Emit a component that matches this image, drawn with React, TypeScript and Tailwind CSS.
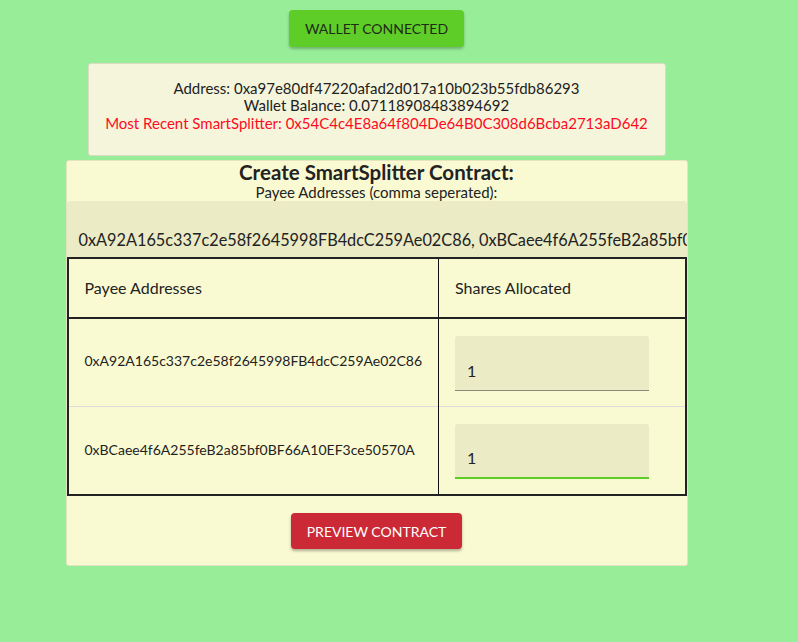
import React from 'react';

const payees = [
  { address: '0xA92A165c337c2e58f2645998FB4dcC259Ae02C86', shares: '1', focused: false },
  { address: '0xBCaee4f6A255feB2a85bf0BF66A10EF3ce50570A', shares: '1', focused: true },
];

export default function App() {
  return (
    <div className="min-h-[642px] w-full bg-[#98ee98] font-['Lato',sans-serif] text-[#222]">
      <div className="w-[753px] flex flex-col items-center pt-[10px]">
        <button className="h-[37px] px-[16px] rounded-[4px] bg-[#5fcd28] text-[14px] text-[#1e2a16] uppercase shadow-[0_2px_3px_rgba(0,0,0,0.25)]">
          Wallet Connected
        </button>

        <div className="mt-[16px] w-[578px] h-[93px] rounded-[3px] border border-[#dcdcc4] bg-[#f5f5dc] flex flex-col justify-center text-center text-[15px] leading-[17.5px] pb-[7px]">
          <div>Address: 0xa97e80df47220afad2d017a10b023b55fdb86293</div>
          <div>Wallet Balance: 0.07118908483894692</div>
          <div className="text-[#ff0a1e]">Most Recent SmartSplitter: 0x54C4c4E8a64f804De64B0C308d6Bcba2713aD642</div>
        </div>

        <div className="mt-[4px] w-[622px] rounded-[3px] border border-[#e4e4c0] bg-[#fafad2] overflow-hidden">
          <h2 className="text-center font-bold text-[20.5px] leading-[23px]">Create SmartSplitter Contract:</h2>
          <p className="text-center text-[15px] leading-[17px]">Payee Addresses (comma seperated):</p>

          <div className="h-[56px] bg-[#ebebc6] rounded-t-[3px] px-[12px] flex items-end pb-[8px] overflow-hidden">
            <span className="whitespace-nowrap text-[16.3px] leading-[18px]">
              0xA92A165c337c2e58f2645998FB4dcC259Ae02C86, 0xBCaee4f6A255feB2a85bf0BF66A10EF3ce50570A
            </span>
          </div>

          <table className="w-[620px] border-collapse border-2 border-[#222] table-fixed">
            <colgroup>
              <col className="w-[371px]" />
              <col />
            </colgroup>
            <thead>
              <tr className="h-[60px] border-b-2 border-[#222]">
                <th className="text-left font-normal text-[16px] pl-[16px] border-r border-[#111]">Payee Addresses</th>
                <th className="text-left font-normal text-[16px] pl-[16px]">Shares Allocated</th>
              </tr>
            </thead>
            <tbody>
              {payees.map((p, i) => (
                <tr key={p.address} className={i === 0 ? 'h-[88px] border-b border-[#dcdcdc]' : 'h-[89px]'}>
                  <td className={'pl-[16px] text-[14px] border-r border-[#111] ' + (i === 0 ? 'pb-[4px]' : 'pb-[1px]')}>{p.address}</td>
                  <td className="pl-[16px]">
                    <div
                      className={
                        'w-[194px] h-[55px] mt-[3px] rounded-t-[3px] bg-[#ebebc6] flex items-end px-[12px] pb-[7px] text-[16px] ' +
                        (p.focused ? 'border-b-2 border-[#5fcd28]' : 'border-b border-[#8a8a7a]')
                      }
                    >
                      {p.shares}
                    </div>
                  </td>
                </tr>
              ))}
            </tbody>
          </table>

          <div className="flex justify-center pt-[17px] pb-[16px]">
            <button className="h-[36px] px-[16px] rounded-[4px] bg-[#cc2936] text-white text-[14px] uppercase shadow-[0_2px_3px_rgba(0,0,0,0.3)]">
              Preview Contract
            </button>
          </div>
        </div>
      </div>
    </div>
  );
}
